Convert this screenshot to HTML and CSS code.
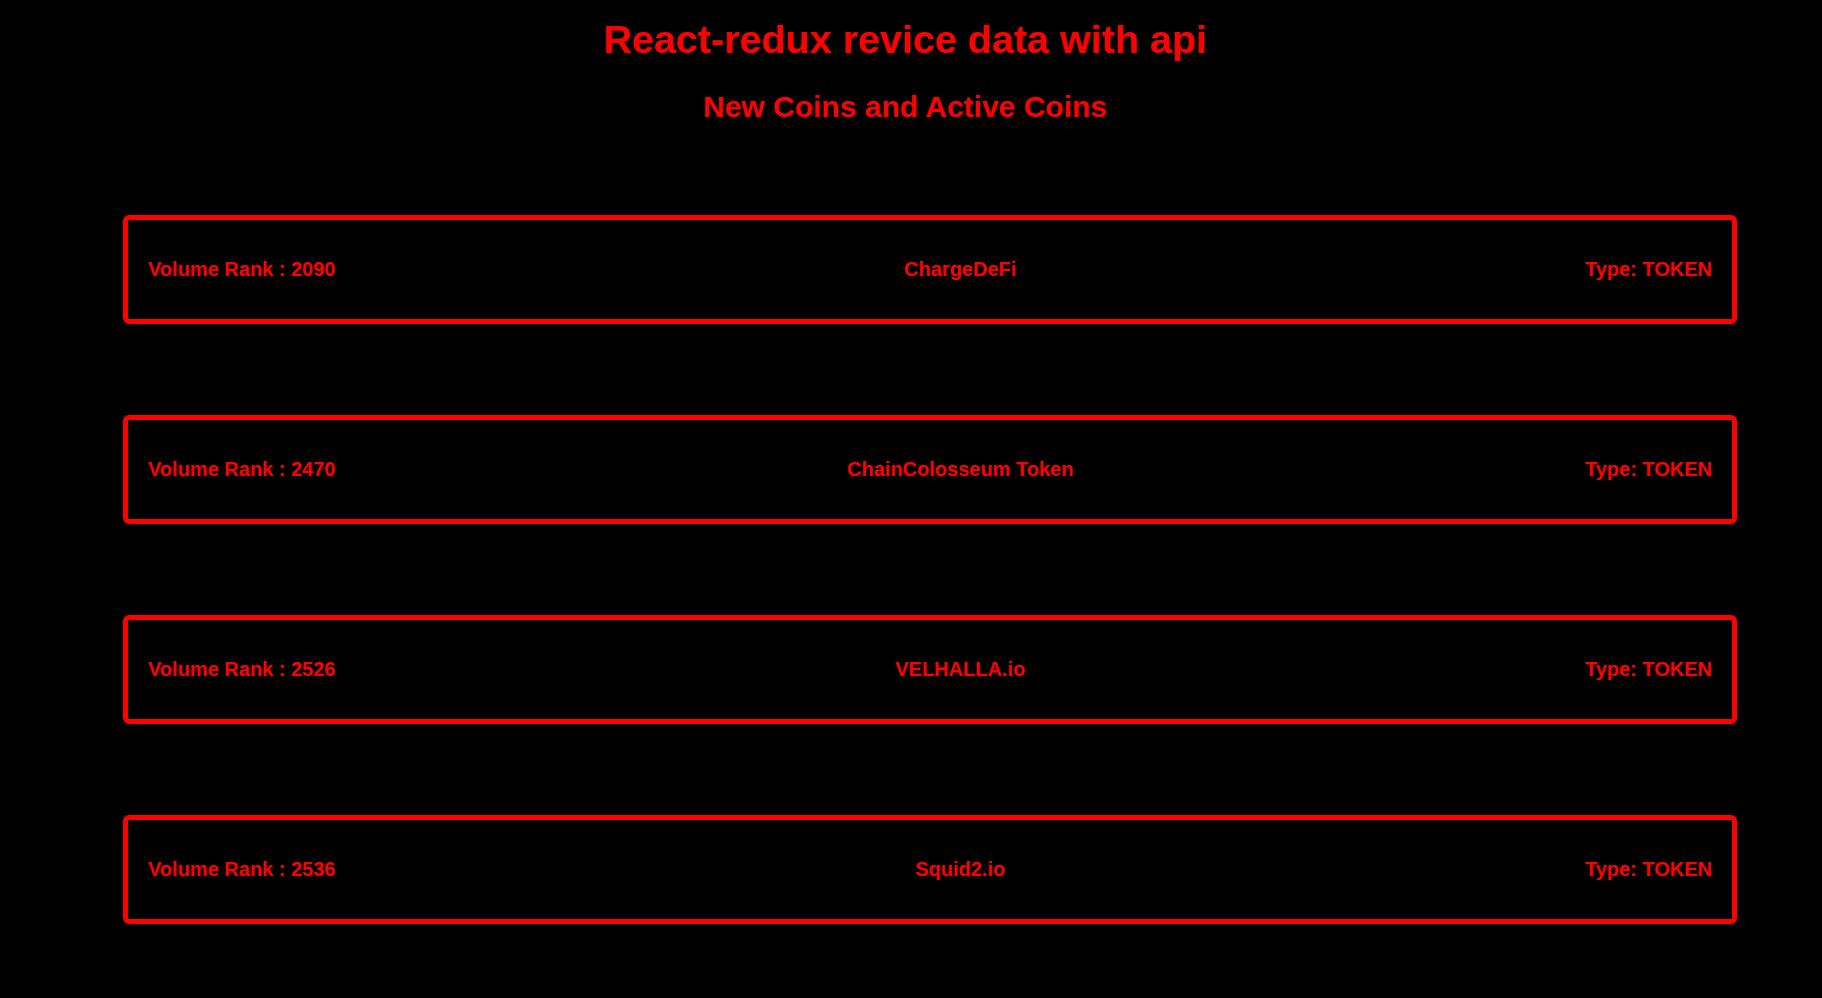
FILE: index.html
```html
<!DOCTYPE html>
<html lang="en">
<head>
<meta charset="utf-8">
<title>React-redux revice data with api</title>
<link rel="stylesheet" href="styles.css">
</head>
<body>
  <header class="header">
    <h1 class="title">React-redux revice data with api</h1>
    <h2 class="subtitle">New Coins and Active Coins</h2>
  </header>
  <main class="coin-list">
    <div class="coin-card">
      <span class="coin-rank">Volume Rank : 2090</span>
      <span class="coin-name">ChargeDeFi</span>
      <span class="coin-type">Type: TOKEN</span>
    </div>
    <div class="coin-card">
      <span class="coin-rank">Volume Rank : 2470</span>
      <span class="coin-name">ChainColosseum Token</span>
      <span class="coin-type">Type: TOKEN</span>
    </div>
    <div class="coin-card">
      <span class="coin-rank">Volume Rank : 2526</span>
      <span class="coin-name">VELHALLA.io</span>
      <span class="coin-type">Type: TOKEN</span>
    </div>
    <div class="coin-card">
      <span class="coin-rank">Volume Rank : 2536</span>
      <span class="coin-name">Squid2.io</span>
      <span class="coin-type">Type: TOKEN</span>
    </div>
  </main>
</body>
</html>
```

FILE: styles.css
```css
html, body {
  margin: 0;
  padding: 0;
  background: #000;
  color: #ff0000;
  font-family: "Liberation Sans", Arial, sans-serif;
}

body {
  min-height: 998px;
}

.header {
  width: 1810px;
  padding-top: 16px;
  text-align: center;
}

.title {
  margin: 0;
  font-weight: bold;
  font-size: 39.5px;
  line-height: 46px;
}

.subtitle {
  margin: 28px 0 0;
  font-weight: bold;
  font-size: 30px;
  line-height: 34px;
}

.coin-list {
  display: flex;
  flex-direction: column;
  gap: 91px;
  margin-top: 91px;
  margin-left: 123px;
  width: 1614px;
}

.coin-card {
  display: flex;
  justify-content: space-between;
  align-items: center;
  border: 5px solid #ff0000;
  border-radius: 6px;
  padding: 38px 20px;
  font-weight: bold;
  font-size: 20px;
  line-height: 23px;
}
```
